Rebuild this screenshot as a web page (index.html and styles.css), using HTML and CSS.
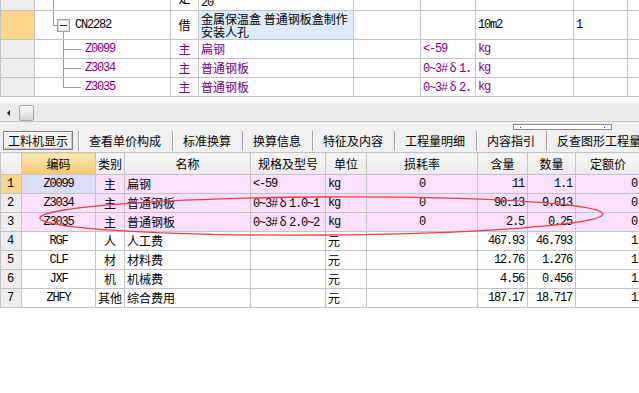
FILE: index.html
```html
<!DOCTYPE html>
<html>
<head>
  <title>工料机显示</title>
  <link rel="stylesheet" href="styles.css">
</head>
<body>
  <div class="top-grid">
    <table class="grid tree-grid">
      <colgroup>
        <col class="t-ind"><col class="t-code"><col class="t-type"><col class="t-name"><col class="t-blank"><col class="t-spec"><col class="t-unit"><col class="t-qty"><col class="t-more">
      </colgroup>
      <tr class="stub">
        <td class="ind"></td>
        <td class="code"><svg class="twig" width="40" height="9"><path d="M18.5 0V10"/></svg></td>
        <td class="center"><div class="clip"><span class="up">定</span></div></td>
        <td class="name"><div class="clip"><span class="mono">20</span></div></td>
        <td></td><td></td><td></td><td></td><td></td>
      </tr>
      <tr class="tall">
        <td class="ind sel"></td>
        <td class="code">
          <div class="tree">
            <svg class="twig" width="40" height="28">
              <path d="M18.5 -1V14.5H22"/>
              <rect class="box" x="22.5" y="8.5" width="12" height="12"/>
              <rect class="box-in" x="23.5" y="9.5" width="10" height="10"/>
              <path class="minus" d="M25 14.5H32"/>
              <path d="M28.5 21V29"/>
            </svg>
            <span class="mono">CN2282</span>
          </div>
        </td>
        <td class="center">借</td>
        <td class="name hl">金属保温盒 普通钢板盒制作<br>安装人孔</td>
        <td></td>
        <td></td>
        <td class="mono">10m2</td>
        <td class="mono">1</td>
        <td></td>
      </tr>
      <tr class="child">
        <td class="ind"></td>
        <td class="code">
          <div class="tree"><svg class="twig" width="50" height="18"><path d="M28.5 -1V19M28.5 9.5H46"/></svg><span class="mono">Z0099</span></div>
        </td>
        <td class="center">主</td>
        <td class="name">扁钢</td>
        <td></td>
        <td class="mono">&lt;-59</td>
        <td class="mono">kg</td>
        <td></td>
        <td></td>
      </tr>
      <tr class="child">
        <td class="ind"></td>
        <td class="code">
          <div class="tree"><svg class="twig" width="50" height="18"><path d="M28.5 -1V19M28.5 9.5H46"/></svg><span class="mono">Z3034</span></div>
        </td>
        <td class="center">主</td>
        <td class="name">普通钢板</td>
        <td></td>
        <td class="mono"><div class="cut">0~3#<span class="wide">δ</span>1.</div></td>
        <td class="mono">kg</td>
        <td></td>
        <td></td>
      </tr>
      <tr class="child">
        <td class="ind"></td>
        <td class="code">
          <div class="tree"><svg class="twig" width="50" height="18"><path d="M28.5 -1V9.5H46"/></svg><span class="mono">Z3035</span></div>
        </td>
        <td class="center">主</td>
        <td class="name">普通钢板</td>
        <td></td>
        <td class="mono"><div class="cut">0~3#<span class="wide">δ</span>2.</div></td>
        <td class="mono">kg</td>
        <td></td>
        <td></td>
      </tr>
    </table>
  </div>

  <div class="hscroll">
    <span class="arrow"></span>
    <span class="thumb"></span>
  </div>

  <div class="tabbar">
    <div class="tab active">工料机显示</div>
    <div class="tab">查看单价构成</div>
    <div class="tab">标准换算</div>
    <div class="tab">换算信息</div>
    <div class="tab">特征及内容</div>
    <div class="tab">工程量明细</div>
    <div class="tab">内容指引</div>
    <div class="tab">反查图形工程量</div>
    <div class="mini-scroll"><i></i><i></i></div>
  </div>

  <table class="grid res-grid">
    <colgroup>
      <col class="r-ind"><col class="r-code"><col class="r-type"><col class="r-name"><col class="r-spec"><col class="r-unit"><col class="r-loss"><col class="r-amt"><col class="r-qty"><col class="r-price">
    </colgroup>
    <tr class="head">
      <th class="ind"></th>
      <th class="hot">编码</th>
      <th>类别</th>
      <th>名称</th>
      <th>规格及型号</th>
      <th>单位</th>
      <th>损耗率</th>
      <th>含量</th>
      <th>数量</th>
      <th>定额价</th>
    </tr>
    <tr class="pink">
      <td class="ind sel mono">1</td>
      <td class="mono center lav">Z0099</td>
      <td class="center">主</td>
      <td class="name">扁钢</td>
      <td class="mono">&lt;-59</td>
      <td class="mono">kg</td>
      <td class="mono center">0</td>
      <td class="mono right">11</td>
      <td class="mono right">1.1</td>
      <td class="mono right">0</td>
    </tr>
    <tr class="pink">
      <td class="ind mono">2</td>
      <td class="mono center">Z3034</td>
      <td class="center">主</td>
      <td class="name">普通钢板</td>
      <td class="mono">0~3#<span class="wide">δ</span>1.0~1</td>
      <td class="mono">kg</td>
      <td class="mono center">0</td>
      <td class="mono right">90.13</td>
      <td class="mono right">9.013</td>
      <td class="mono right">0</td>
    </tr>
    <tr class="pink">
      <td class="ind mono">3</td>
      <td class="mono center">Z3035</td>
      <td class="center">主</td>
      <td class="name">普通钢板</td>
      <td class="mono">0~3#<span class="wide">δ</span>2.0~2</td>
      <td class="mono">kg</td>
      <td class="mono center">0</td>
      <td class="mono right">2.5</td>
      <td class="mono right">0.25</td>
      <td class="mono right">0</td>
    </tr>
    <tr>
      <td class="ind mono">4</td>
      <td class="mono center">RGF</td>
      <td class="center">人</td>
      <td class="name">人工费</td>
      <td></td>
      <td>元</td>
      <td></td>
      <td class="mono right">467.93</td>
      <td class="mono right">46.793</td>
      <td class="mono right">1</td>
    </tr>
    <tr>
      <td class="ind mono">5</td>
      <td class="mono center">CLF</td>
      <td class="center">材</td>
      <td class="name">材料费</td>
      <td></td>
      <td>元</td>
      <td></td>
      <td class="mono right">12.76</td>
      <td class="mono right">1.276</td>
      <td class="mono right">1</td>
    </tr>
    <tr>
      <td class="ind mono">6</td>
      <td class="mono center">JXF</td>
      <td class="center">机</td>
      <td class="name">机械费</td>
      <td></td>
      <td>元</td>
      <td></td>
      <td class="mono right">4.56</td>
      <td class="mono right">0.456</td>
      <td class="mono right">1</td>
    </tr>
    <tr>
      <td class="ind mono">7</td>
      <td class="mono center">ZHFY</td>
      <td class="center">其他</td>
      <td class="name">综合费用</td>
      <td></td>
      <td>元</td>
      <td></td>
      <td class="mono right">187.17</td>
      <td class="mono right">18.717</td>
      <td class="mono right">1</td>
    </tr>
  </table>

  <!-- hand-drawn mark over rows 2 and 3 -->
  <svg class="mark" width="639" height="393">
    <ellipse cx="321.5" cy="216" rx="281.5" ry="19" transform="rotate(-0.4 321.5 216)"/>
  </svg>
</body>
</html>
```

FILE: styles.css
```css
body {
  margin: 0;
  width: 639px;
  height: 393px;
  overflow: hidden;
  position: relative;
  background-color: #fff;
  font-family: "Noto Sans CJK SC", sans-serif;
  font-size: 12px;
  color: #000;
}

/* shared grid look */
.grid {
  border-collapse: collapse;
  table-layout: fixed;
}

.grid td,
.grid th {
  border: 1px solid #c3c3c3;
  padding: 0 2px;
  white-space: nowrap;
  overflow: hidden;
  line-height: 16px;
  text-align: left;
  vertical-align: middle;
}

.mono {
  font-family: "Liberation Mono", monospace;
  font-size: 12px;
  letter-spacing: -1.2px;
}

.wide {
  font-family: "Noto Sans CJK SC", sans-serif;
  font-size: 12px;
  letter-spacing: 0;
  display: inline-block;
  width: 12px;
  text-align: center;
}

.cut {
  overflow: hidden;
}

.center {
  text-align: center !important;
}

.right {
  text-align: right !important;
  padding-right: 3px !important;
}

.ind {
  background-color: #ededed;
}

.ind.sel {
  background-color: #fdd68c;
}

/* top tree grid */
.top-grid {
  height: 103px;
  overflow: hidden;
}

.tree-grid {
  width: 707px;
}

.t-ind { width: 34px; }
.t-code { width: 136px; }
.t-type { width: 28px; }
.t-name { width: 155px; }
.t-blank { width: 67px; }
.t-spec { width: 55px; }
.t-unit { width: 98px; }
.t-qty { width: 54px; }
.t-more { width: 80px; }

.tree-grid tr.stub {
  height: 10px;
}

.tree-grid tr.stub td {
  border-top: none;
  line-height: 9px;
}

.tree-grid tr.tall {
  height: 29px;
}

.tree-grid tr.child {
  height: 19px;
}

.tree-grid tr.child td {
  color: #800080;
}

.tree-grid td.code {
  padding: 0;
}

.tree-grid td.name {
  padding-left: 2px;
}

.tree-grid tr.tall td.name {
  line-height: 13px;
}

.tree-grid td.hl {
  background-color: #dcecfc;
}

.clip {
  height: 9px;
  overflow: hidden;
  display: flex;
  align-items: flex-end;
  line-height: 12px;
}

.center .clip {
  justify-content: center;
}

.clip .up {
  margin-bottom: 5px;
}

.tree {
  display: flex;
  align-items: center;
}

.twig {
  display: block;
  flex: none;
  overflow: visible;
}

.twig path {
  fill: none;
  stroke: #9a9a9a;
  stroke-width: 1;
}

.twig .box {
  fill: #e6e6e6;
  stroke: #a4a4a4;
}

.twig .box-in {
  fill: #fafafa;
  stroke: #dcdcdc;
}

.twig path.minus {
  stroke: #222;
}

/* horizontal scroll strip */
.hscroll {
  height: 17px;
  border-top: 1px solid #f3f3f3;
  background-color: #ebebeb;
  display: flex;
  align-items: center;
}

.arrow {
  margin-left: 7px;
  width: 0;
  height: 0;
  border-top: 3px solid transparent;
  border-bottom: 3px solid transparent;
  border-right: 3px solid #222;
}

.thumb {
  margin-left: 9px;
  width: 13px;
  height: 14px;
  border: 1px solid #a9a9a9;
  border-radius: 2px;
  background: linear-gradient(#fbfbfb, #d8d8d8);
}

/* tab strip */
.tabbar {
  position: relative;
  height: 31px;
  box-sizing: border-box;
  border-top: 1px solid #c6c6c6;
  background-color: #f0f0f0;
  display: flex;
  align-items: flex-start;
  padding-top: 9px;
}

.tab {
  flex: none;
  height: 20px;
  line-height: 20px;
  padding: 0 11px 0 10px;
  border-left: 1px solid #a6a6a6;
  box-shadow: inset 1px 0 #fff;
  color: #000;
}

.tab.active {
  margin-left: 3px;
  margin-right: 5px;
  height: 17px;
  line-height: 17px;
  padding: 0 4px;
  border: 1px solid #7c7c7c;
  box-shadow: inset 1px 1px #fff, inset -1px -1px #c8c8c8;
}

.mini-scroll {
  position: absolute;
  left: 513px;
  top: 2px;
  width: 97px;
  height: 4px;
  border: 1px solid #8a8a8a;
  background-color: #fff;
}

.mini-scroll i {
  position: absolute;
  top: 2px;
  width: 1px;
  height: 1px;
  background-color: #2030c0;
}

.mini-scroll i:first-child { left: 6px; }
.mini-scroll i:last-child { right: 6px; }

/* resource grid */
.res-grid {
  width: 640px;
}

.r-ind { width: 21px; }
.r-code { width: 74px; }
.r-type { width: 29px; }
.r-name { width: 126px; }
.r-spec { width: 75px; }
.r-unit { width: 41px; }
.r-loss { width: 111px; }
.r-amt { width: 50px; }
.r-qty { width: 48px; }
.r-price { width: 65px; }

.res-grid tr {
  height: 19px;
}

.res-grid tr.head {
  height: 22px;
}

.res-grid th {
  font-weight: normal;
  text-align: center;
  background: linear-gradient(#f6f6f6, #ebebeb);
}

.res-grid th.hot {
  background: linear-gradient(#fde7b6, #f6c66f);
}

.res-grid td.ind {
  padding-left: 6px;
}

.res-grid td.name {
  padding-left: 2px;
}

.res-grid tr.pink td {
  background-color: #fde0fd;
}

.res-grid tr.pink td.ind {
  background-color: #ededed;
}

.res-grid tr.pink td.ind.sel {
  background-color: #fdd68c;
}

.res-grid tr.pink td.lav {
  background-color: #dcdcfb;
}

/* annotation */
.mark {
  position: absolute;
  left: 0;
  top: 0;
  pointer-events: none;
}

.mark ellipse {
  fill: none;
  stroke: #ef3e4a;
  stroke-width: 1.3;
}
```
